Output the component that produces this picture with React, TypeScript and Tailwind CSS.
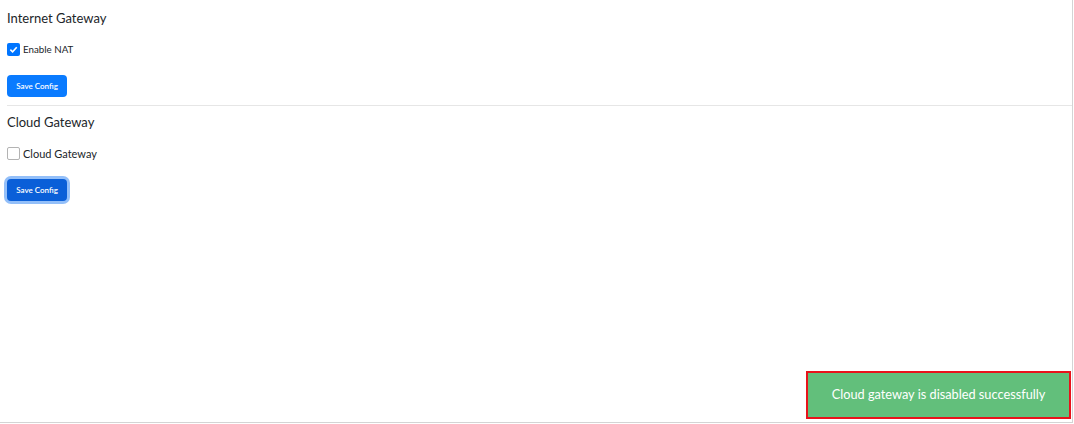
import React, { useState } from 'react';

function Section({ title, label, checked, focused, top, labelSize, onToggle }: { title: string; label: string; checked: boolean; focused?: boolean; top: string; labelSize: string; onToggle: () => void }) {
    return (
        <div className={'px-[7px] ' + top}>
            <p className='text-[13px] text-[#212529] leading-none'>{title}</p>
            <label className='flex items-center mt-[18px] h-[13px] cursor-pointer'>
                <span className={checked
                    ? 'w-[13px] h-[13px] rounded-[2px] bg-[#0075ff] flex items-center justify-center'
                    : 'w-[13px] h-[13px] rounded-[2px] border border-[#b3b3b3] bg-white'}
                    onClick={onToggle}>
                    {checked ? (
                        <svg width="9" height="9" viewBox="0 0 10 10">
                            <path d="M1.5 5.2 L4 7.5 L8.6 2.5" stroke="white" strokeWidth="1.8" fill="none" />
                        </svg>
                    ) : null}
                </span>
                <span className={'ml-[3px] leading-none text-[#212529] ' + labelSize}>{label}</span>
            </label>
            <button className={focused
                ? 'block mt-[19px] w-[60px] h-[22px] rounded-[4px] bg-[#0a5fd8] text-white text-[8px] font-semibold ring-[3px] ring-[#93bff9]'
                : 'block mt-[19px] w-[60px] h-[22px] rounded-[4px] bg-[#0a7bff] text-white text-[8px] font-semibold'}>
                Save Config
            </button>
        </div>
    )
}

export default function App() {
    const [nat, setNat] = useState(true);
    const [cloud, setCloud] = useState(false);
    return (
        <div className='w-[1074px] h-[424px] bg-white relative' style={{ fontFamily: 'Lato, sans-serif' }}>
            <div className='w-[1073px] h-[423px] border-r border-b border-[#d4d4d4]'>
                <div className='pb-[8px]'>
                    <Section title='Internet Gateway' label='Enable NAT' checked={nat} top='pt-[12px]' labelSize='text-[9.75px]' onToggle={() => setNat(!nat)} />
                </div>
                <div className='ml-[7px] border-t border-[#e6e6e6]' />
                <Section title='Cloud Gateway' label='Cloud Gateway' checked={cloud} focused top='pt-[10px]' labelSize='text-[11px]' onToggle={() => setCloud(!cloud)} />
            </div>
            <div className='absolute left-[806px] top-[371px] w-[265px] h-[48px] bg-[#62bf7b] border-2 border-[#e8131b] flex items-center justify-center text-white text-[12.75px]'>
                Cloud gateway is disabled successfully
            </div>
        </div>
    )
}
